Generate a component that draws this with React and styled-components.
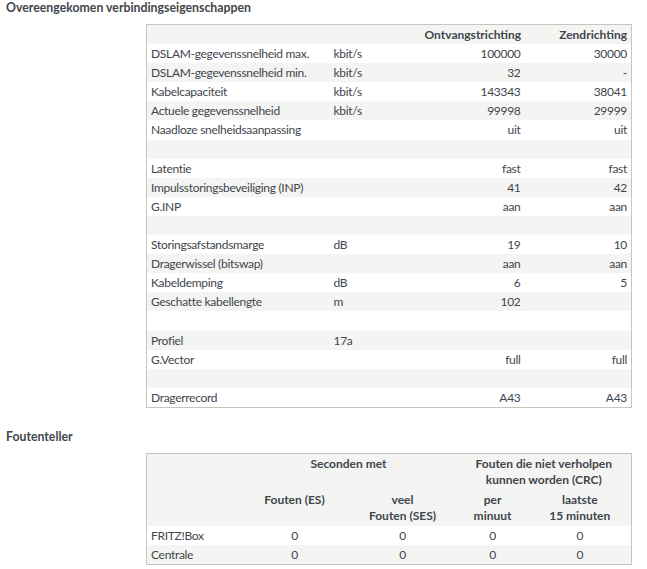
import styled, { createGlobalStyle } from 'styled-components'

const GlobalStyle = createGlobalStyle`
    body {
        margin: 0;
        background: #fff;
        font-family: Lato, "Liberation Sans", sans-serif;
        font-size: 12px;
        color: #3f464c;
    }
`

const lineRows = [
    ['DSLAM-gegevenssnelheid max.', 'kbit/s', '100000', '30000'],
    ['DSLAM-gegevenssnelheid min.', 'kbit/s', '32', '-'],
    ['Kabelcapaciteit', 'kbit/s', '143343', '38041'],
    ['Actuele gegevenssnelheid', 'kbit/s', '99998', '29999'],
    ['Naadloze snelheidsaanpassing', '', 'uit', 'uit'],
    null,
    ['Latentie', '', 'fast', 'fast'],
    ['Impulsstoringsbeveiliging (INP)', '', '41', '42'],
    ['G.INP', '', 'aan', 'aan'],
    null,
    ['Storingsafstandsmarge', 'dB', '19', '10'],
    ['Dragerwissel (bitswap)', '', 'aan', 'aan'],
    ['Kabeldemping', 'dB', '6', '5'],
    ['Geschatte kabellengte', 'm', '102', ''],
    null,
    ['Profiel', '17a', '', ''],
    ['G.Vector', '', 'full', 'full'],
    null,
    ['Dragerrecord', '', 'A43', 'A43'],
]

const errorRows = [
    ['FRITZ!Box', '0', '0', '0', '0'],
    ['Centrale', '0', '0', '0', '0'],
]

export default function App() {
    return (
        <Page>
            <GlobalStyle />
            <Heading>Overeengekomen verbindingseigenschappen</Heading>
            <DataTable>
                <colgroup>
                    <col style={{ width: 183 }} />
                    <col style={{ width: 91 }} />
                    <col style={{ width: 104 }} />
                    <col style={{ width: 107 }} />
                </colgroup>
                <thead>
                    <Row>
                        <HeadCell />
                        <HeadCell />
                        <HeadCell $align="right">Ontvangstrichting</HeadCell>
                        <HeadCell $align="right">Zendrichting</HeadCell>
                    </Row>
                </thead>
                <tbody>
                    {lineRows.map((row, i) => (
                        <Row key={i} $shaded={i % 2 === 1}>
                            {row ? (
                                <>
                                    <Cell>{row[0]}</Cell>
                                    <Cell>{row[1]}</Cell>
                                    <Cell $align="right">{row[2]}</Cell>
                                    <Cell $align="right">{row[3]}</Cell>
                                </>
                            ) : (
                                <Cell colSpan={4}>&nbsp;</Cell>
                            )}
                        </Row>
                    ))}
                </tbody>
            </DataTable>

            <Heading $spaced>Foutenteller</Heading>
            <DataTable>
                <colgroup>
                    <col style={{ width: 94 }} />
                    <col style={{ width: 108 }} />
                    <col style={{ width: 108 }} />
                    <col style={{ width: 72 }} />
                    <col style={{ width: 103 }} />
                </colgroup>
                <thead>
                    <Row>
                        <MultiHead />
                        <MultiHead colSpan={2}>Seconden met</MultiHead>
                        <MultiHead colSpan={2}>
                            Fouten die niet verholpen<br />kunnen worden (CRC)
                        </MultiHead>
                    </Row>
                    <Row>
                        <MultiHead />
                        <MultiHead>Fouten (ES)</MultiHead>
                        <MultiHead>veel<br />Fouten (SES)</MultiHead>
                        <MultiHead>per<br />minuut</MultiHead>
                        <MultiHead>laatste<br />15 minuten</MultiHead>
                    </Row>
                </thead>
                <tbody>
                    {errorRows.map((row, i) => (
                        <Row key={row[0]} $shaded={i % 2 === 1}>
                            {row.map((value, j) => (
                                <Cell key={j} $align={j === 0 ? 'left' : 'center'}>{value}</Cell>
                            ))}
                        </Row>
                    ))}
                </tbody>
            </DataTable>
        </Page>
    )
}

const Page = styled.div`
    padding: 0 6px;
`

const Heading = styled.h2`
    margin: ${props => (props.$spaced ? '21px' : '0')} 0 8px;
    font-size: 12.3px;
    font-weight: bold;
    line-height: 16px;
    color: #3f464c;
`

const DataTable = styled.table`
    margin-left: 140px;
    width: 485px;
    table-layout: fixed;
    border-collapse: collapse;
    border: 1px solid #c6c6c0;
`

const Row = styled.tr`
    background: ${props => (props.$shaded ? '#f4f4f2' : '#fff')};

    thead & {
        background: #f4f4f2;
    }
`

const Cell = styled.td`
    padding: 2px 4px;
    line-height: 15.1px;
    letter-spacing: -0.3px;
    text-align: ${props => props.$align || 'left'};
    white-space: nowrap;
`

const HeadCell = styled.th`
    padding: 2px 4px;
    line-height: 15.1px;
    font-weight: bold;
    text-align: ${props => props.$align || 'left'};
    white-space: nowrap;
`

const MultiHead = styled.th`
    padding: 2px 4px;
    line-height: 16px;
    font-weight: bold;
    text-align: center;
    vertical-align: top;
`
